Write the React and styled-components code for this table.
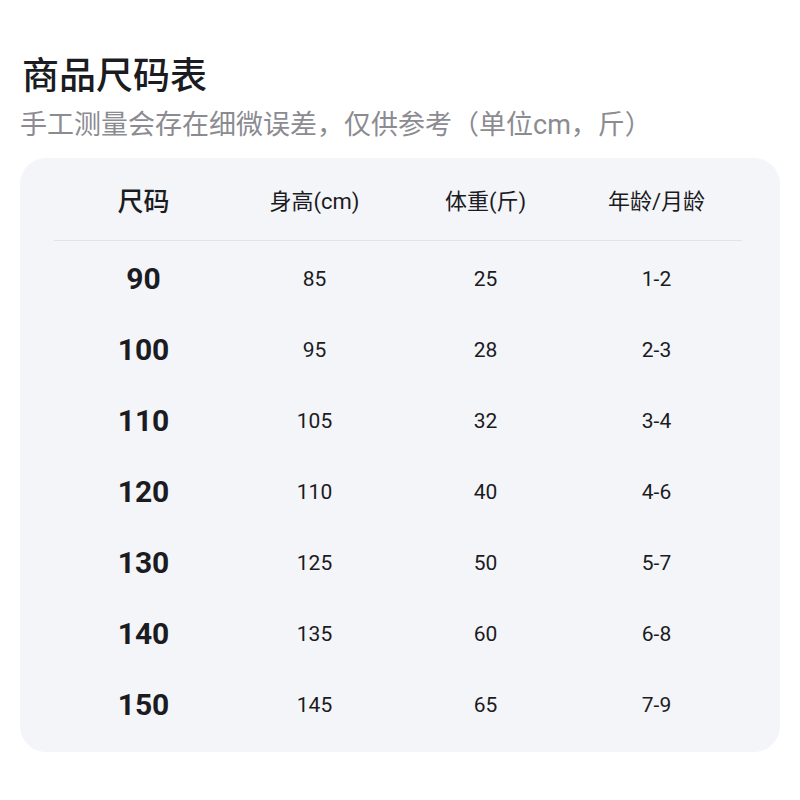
import styled, { createGlobalStyle } from "styled-components";

const rows = [
  { size: "90", height: "85", weight: "25", age: "1-2" },
  { size: "100", height: "95", weight: "28", age: "2-3" },
  { size: "110", height: "105", weight: "32", age: "3-4" },
  { size: "120", height: "110", weight: "40", age: "4-6" },
  { size: "130", height: "125", weight: "50", age: "5-7" },
  { size: "140", height: "135", weight: "60", age: "6-8" },
  { size: "150", height: "145", weight: "65", age: "7-9" },
];

const GlobalStyle = createGlobalStyle`
  body {
    margin: 0;
    background: #ffffff;
    font-family: Roboto, "Noto Sans CJK SC", sans-serif;
  }
`;

const Page = styled.div`
  width: 800px;
  height: 800px;
  padding: 52px 20px 0 20px;
  box-sizing: border-box;
`;

const Title = styled.h1`
  margin: 0 0 0 2px;
  font-size: 37px;
  font-weight: 500;
  line-height: 50px;
  color: #1b1b22;
`;

const Subtitle = styled.p`
  margin: 0;
  font-size: 27px;
  line-height: 46px;
  color: #8b8b91;
`;

const Card = styled.div`
  margin-top: 10px;
  background: #f4f5f9;
  border-radius: 26px;
  padding: 0 38px 12px 38px;
`;

const Row = styled.div`
  display: grid;
  grid-template-columns: repeat(4, 1fr);
  align-items: center;
  height: ${({ $head }) => ($head ? "82px" : "71px")};
  color: #1b1b22;
`;

const Cell = styled.div`
  text-align: center;
  font-size: ${({ $big }) => ($big ? "30px" : "21px")};
  font-weight: ${({ $big }) => ($big ? 700 : 400)};
`;

const HeadCell = styled.div`
  text-align: center;
  font-size: ${({ $big }) => ($big ? "26px" : "22px")};
  font-weight: ${({ $big }) => ($big ? 500 : 400)};
`;

const Divider = styled.div`
  height: 1px;
  background: #e2e3e9;
  margin: 0 0 2px -4px;
`;

export default function App() {
  return (
    <Page>
      <GlobalStyle />
      <Title>商品尺码表</Title>
      <Subtitle>手工测量会存在细微误差，仅供参考（单位cm，斤）</Subtitle>
      <Card>
        <Row $head>
          <HeadCell $big>尺码</HeadCell>
          <HeadCell>身高(cm)</HeadCell>
          <HeadCell>体重(斤)</HeadCell>
          <HeadCell>年龄/月龄</HeadCell>
        </Row>
        <Divider />
        {rows.map((r) => (
          <Row key={r.size}>
            <Cell $big>{r.size}</Cell>
            <Cell>{r.height}</Cell>
            <Cell>{r.weight}</Cell>
            <Cell>{r.age}</Cell>
          </Row>
        ))}
      </Card>
    </Page>
  );
}
